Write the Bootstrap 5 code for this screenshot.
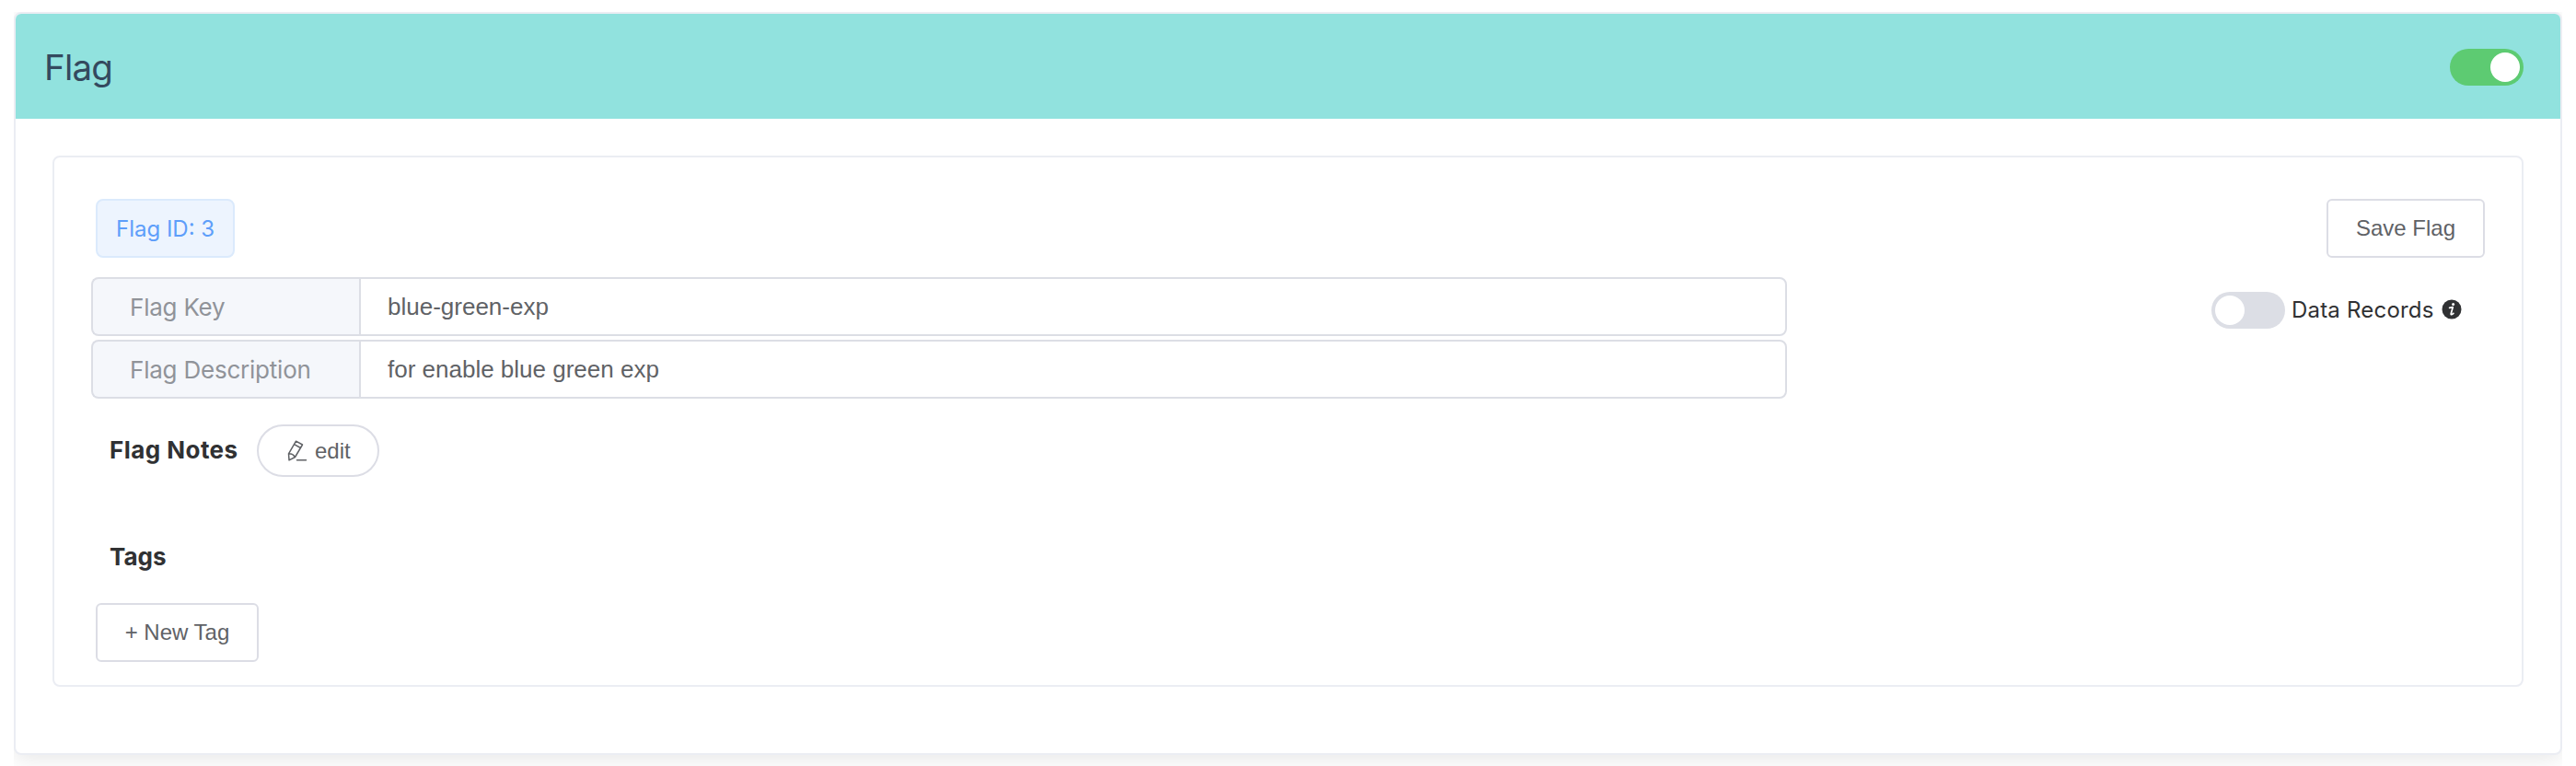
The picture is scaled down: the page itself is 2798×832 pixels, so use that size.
<!DOCTYPE html>
<html lang="en">
<head>
<meta charset="utf-8">
<meta name="viewport" content="width=device-width, initial-scale=1">
<title>Flag</title>
<link href="https://cdn.jsdelivr.net/npm/bootstrap@5.3.0/dist/css/bootstrap.min.css" rel="stylesheet">
<style>
body{font-family:Inter,"Liberation Sans",sans-serif;font-size:24px;color:#303133;background:#fff;overflow:hidden;height:832px}
.stage{padding:13px 15px 0;height:832px}
.clipbox{height:819px;clip-path:inset(0)}
.flag-card{height:807px;border:2px solid #ebedf3;border-radius:8px;box-shadow:0 4px 24px rgba(0,0,0,.1)}
.flag-head{height:114px;background:#91e2de;border:0;border-radius:6px 6px 0 0!important;padding:2px 40px 0 31px}
.flag-title{font-size:38.5px;line-height:48px;color:#34495e;letter-spacing:-.8px;margin:0}
.flag-body{padding:40px}
.inner-card{height:577px;border:2px solid #ebedf3;border-radius:8px;padding:45px 40px 0}
.el-switch{width:80px;height:40px;border-radius:20px;padding:4px;background:#dcdee5}
.el-switch.on{background:#5dcb72;justify-content:flex-end}
.knob{width:32px;height:32px;border-radius:50%;background:#fff}
.id-tag{width:151px;height:64px;margin-left:5px;padding:2px 0 0 20px;border:2px solid #dbeafc;border-radius:8px;background:#edf4fe;color:#5d9efa;white-space:nowrap}
.el-btn{--bs-btn-color:#606266;--bs-btn-bg:#fff;--bs-btn-border-color:#dcdde5;border-width:2px;border-radius:6px;height:64px;padding:0;font-family:"Liberation Sans",Arial,sans-serif;font-size:24px;line-height:30px}
.save{width:172px}
.blk-fields{margin-top:21px}
.fields{width:1842px;gap:4px}
.field{height:64px;flex-wrap:nowrap}
.field .input-group-text{width:292px;padding:0 0 0 40px;font-size:26px;letter-spacing:-.22px;color:#909399;background:#f5f7fb;border:2px solid #dcdee5;border-right:0;border-radius:8px}
.field .form-control{margin-left:-1px!important;padding:0 0 0 29px;font-family:"Liberation Sans",Arial,sans-serif;font-size:26px;color:#606266;border:2px solid #dcdee5;border-radius:8px}
.records{width:273px;margin:16px 24px 0 0}
.records-label{margin-left:7px;letter-spacing:.2px;white-space:nowrap}
.info{margin:-2px 1px 0 auto}
.blk-notes{width:313px;margin-top:28px}
.sect{font-size:26px;line-height:32px;font-weight:700;margin:0 0 0 20px;white-space:nowrap}
.notes-title{letter-spacing:.45px;margin-top:-1px}
.edit{width:133px;height:57px;border-radius:29px;margin-left:auto}
.pen{margin:0 8px 0 31px;flex:none}
.blk-tags{margin-top:71px}
.new-tag{width:177px;margin:34px 0 0 5px}
</style>
</head>
<body>
<main class="stage">
<div class="clipbox">
<div class="card flag-card">
  <div class="card-header flag-head d-flex align-items-center justify-content-between">
    <h1 class="flag-title fw-normal">Flag</h1>
    <div class="el-switch on d-flex" role="switch" aria-checked="true"><span class="knob"></span></div>
  </div>
  <div class="card-body flag-body">
    <section class="card inner-card">
      <div class="d-flex justify-content-between">
        <div class="id-tag d-flex align-items-center">Flag ID: 3</div>
        <button class="btn el-btn save">Save Flag</button>
      </div>
      <div class="d-flex justify-content-between align-items-start blk-fields">
        <div class="fields d-grid">
          <div class="input-group field"><label class="input-group-text" for="k">Flag Key</label><input id="k" class="form-control" value="blue-green-exp"></div>
          <div class="input-group field"><label class="input-group-text" for="d">Flag Description</label><input id="d" class="form-control" value="for enable blue green exp"></div>
        </div>
        <div class="records d-flex align-items-center">
          <div class="el-switch d-flex" role="switch" aria-checked="false"><span class="knob"></span></div>
          <span class="records-label">Data Records</span>
          <svg class="info" width="22" height="22" viewBox="0 0 22 22"><circle cx="11" cy="11" r="10.5" fill="#303133"/><circle cx="12.600" cy="5.400" r="1.500" fill="#fff"/><path d="M8.600 9.400 12.200 8.700 10.200 15.700C9.900 17.300 11.300 17 12.900 15.400" fill="none" stroke="#fff" stroke-width="1.700" stroke-linecap="round" stroke-linejoin="round"/></svg>
        </div>
      </div>
      <div class="d-flex align-items-center blk-notes">
        <h2 class="sect notes-title">Flag Notes</h2>
        <button class="btn el-btn edit d-flex align-items-center"><svg class="pen" width="22" height="24" viewBox="0 0 22 24" fill="none" stroke="#606266" stroke-width="1.500" stroke-linejoin="round"><path d="M9.500 1.200 16.500 5 8.500 18.500 2 21.800 1.500 14.800Z M7.600 4.600 14.500 8.500 M1.500 14.800Q6 14.500 8.500 18.500 M10.500 21.700H20.500" stroke-linecap="round"/></svg>edit</button>
      </div>
      <h2 class="sect blk-tags">Tags</h2>
      <button class="btn el-btn new-tag align-self-start">+ New Tag</button>
    </section>
  </div>
</div>
</div>
</main>
<script src="https://cdn.jsdelivr.net/npm/bootstrap@5.3.0/dist/js/bootstrap.bundle.min.js"></script>
</body>
</html>
